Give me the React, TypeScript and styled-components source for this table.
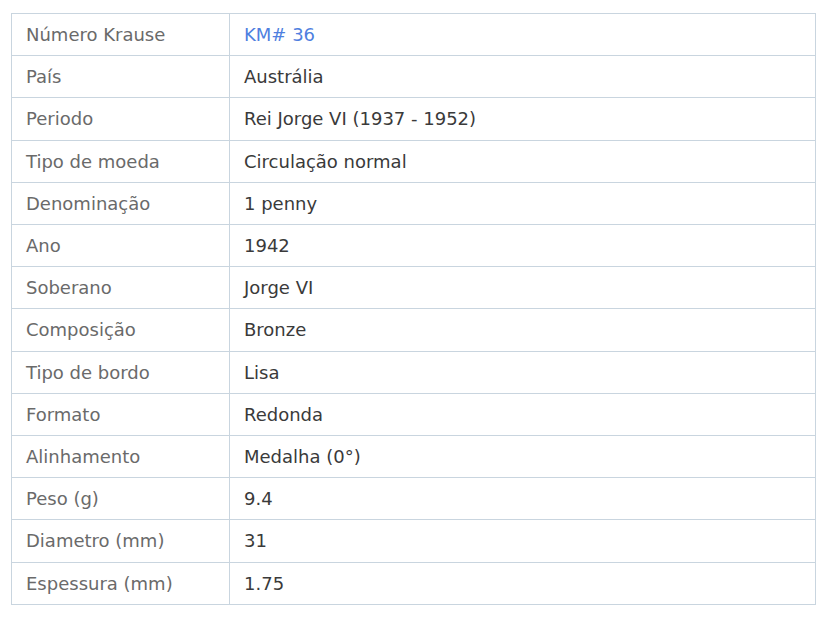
import styled, { createGlobalStyle } from "styled-components";

const GlobalStyle = createGlobalStyle`
  body {
    margin: 0;
    background: #ffffff;
    font-family: "DejaVu Sans", Verdana, sans-serif;
  }
`

const Wrapper = styled.div`
  padding: 13px 0 0 11px;
`

const SpecTable = styled.table`
  width: 805px;
  border-collapse: collapse;
  font-family: "DejaVu Sans", Verdana, sans-serif;
  font-size: 18px;
  border: 1px solid #c9d5df;
`

const Row = styled.tr``

const Label = styled.td`
  width: 189px;
  padding: 10px 14px;
  line-height: 21.2px;
  color: #6a6a6a;
  border: 1px solid #c9d5df;
  white-space: nowrap;
`

const Value = styled.td<{ $link?: boolean }>`
  padding: 10px 14px;
  line-height: 21.2px;
  color: ${(p) => (p.$link ? "#4f7fe0" : "#3a3a3a")};
  border: 1px solid #c9d5df;
`

const rows: [string, string, boolean?][] = [
  ["Número Krause", "KM# 36", true],
  ["País", "Austrália"],
  ["Periodo", "Rei Jorge VI (1937 - 1952)"],
  ["Tipo de moeda", "Circulação normal"],
  ["Denominação", "1 penny"],
  ["Ano", "1942"],
  ["Soberano", "Jorge VI"],
  ["Composição", "Bronze"],
  ["Tipo de bordo", "Lisa"],
  ["Formato", "Redonda"],
  ["Alinhamento", "Medalha (0°)"],
  ["Peso (g)", "9.4"],
  ["Diametro (mm)", "31"],
  ["Espessura (mm)", "1.75"],
]

export default function App() {
  return (
    <Wrapper>
      <GlobalStyle />
      <SpecTable>
        <tbody>
          {rows.map(([k, v, link]) => (
            <Row key={k}>
              <Label>{k}</Label>
              <Value $link={link}>{v}</Value>
            </Row>
          ))}
        </tbody>
      </SpecTable>
    </Wrapper>
  )
}
